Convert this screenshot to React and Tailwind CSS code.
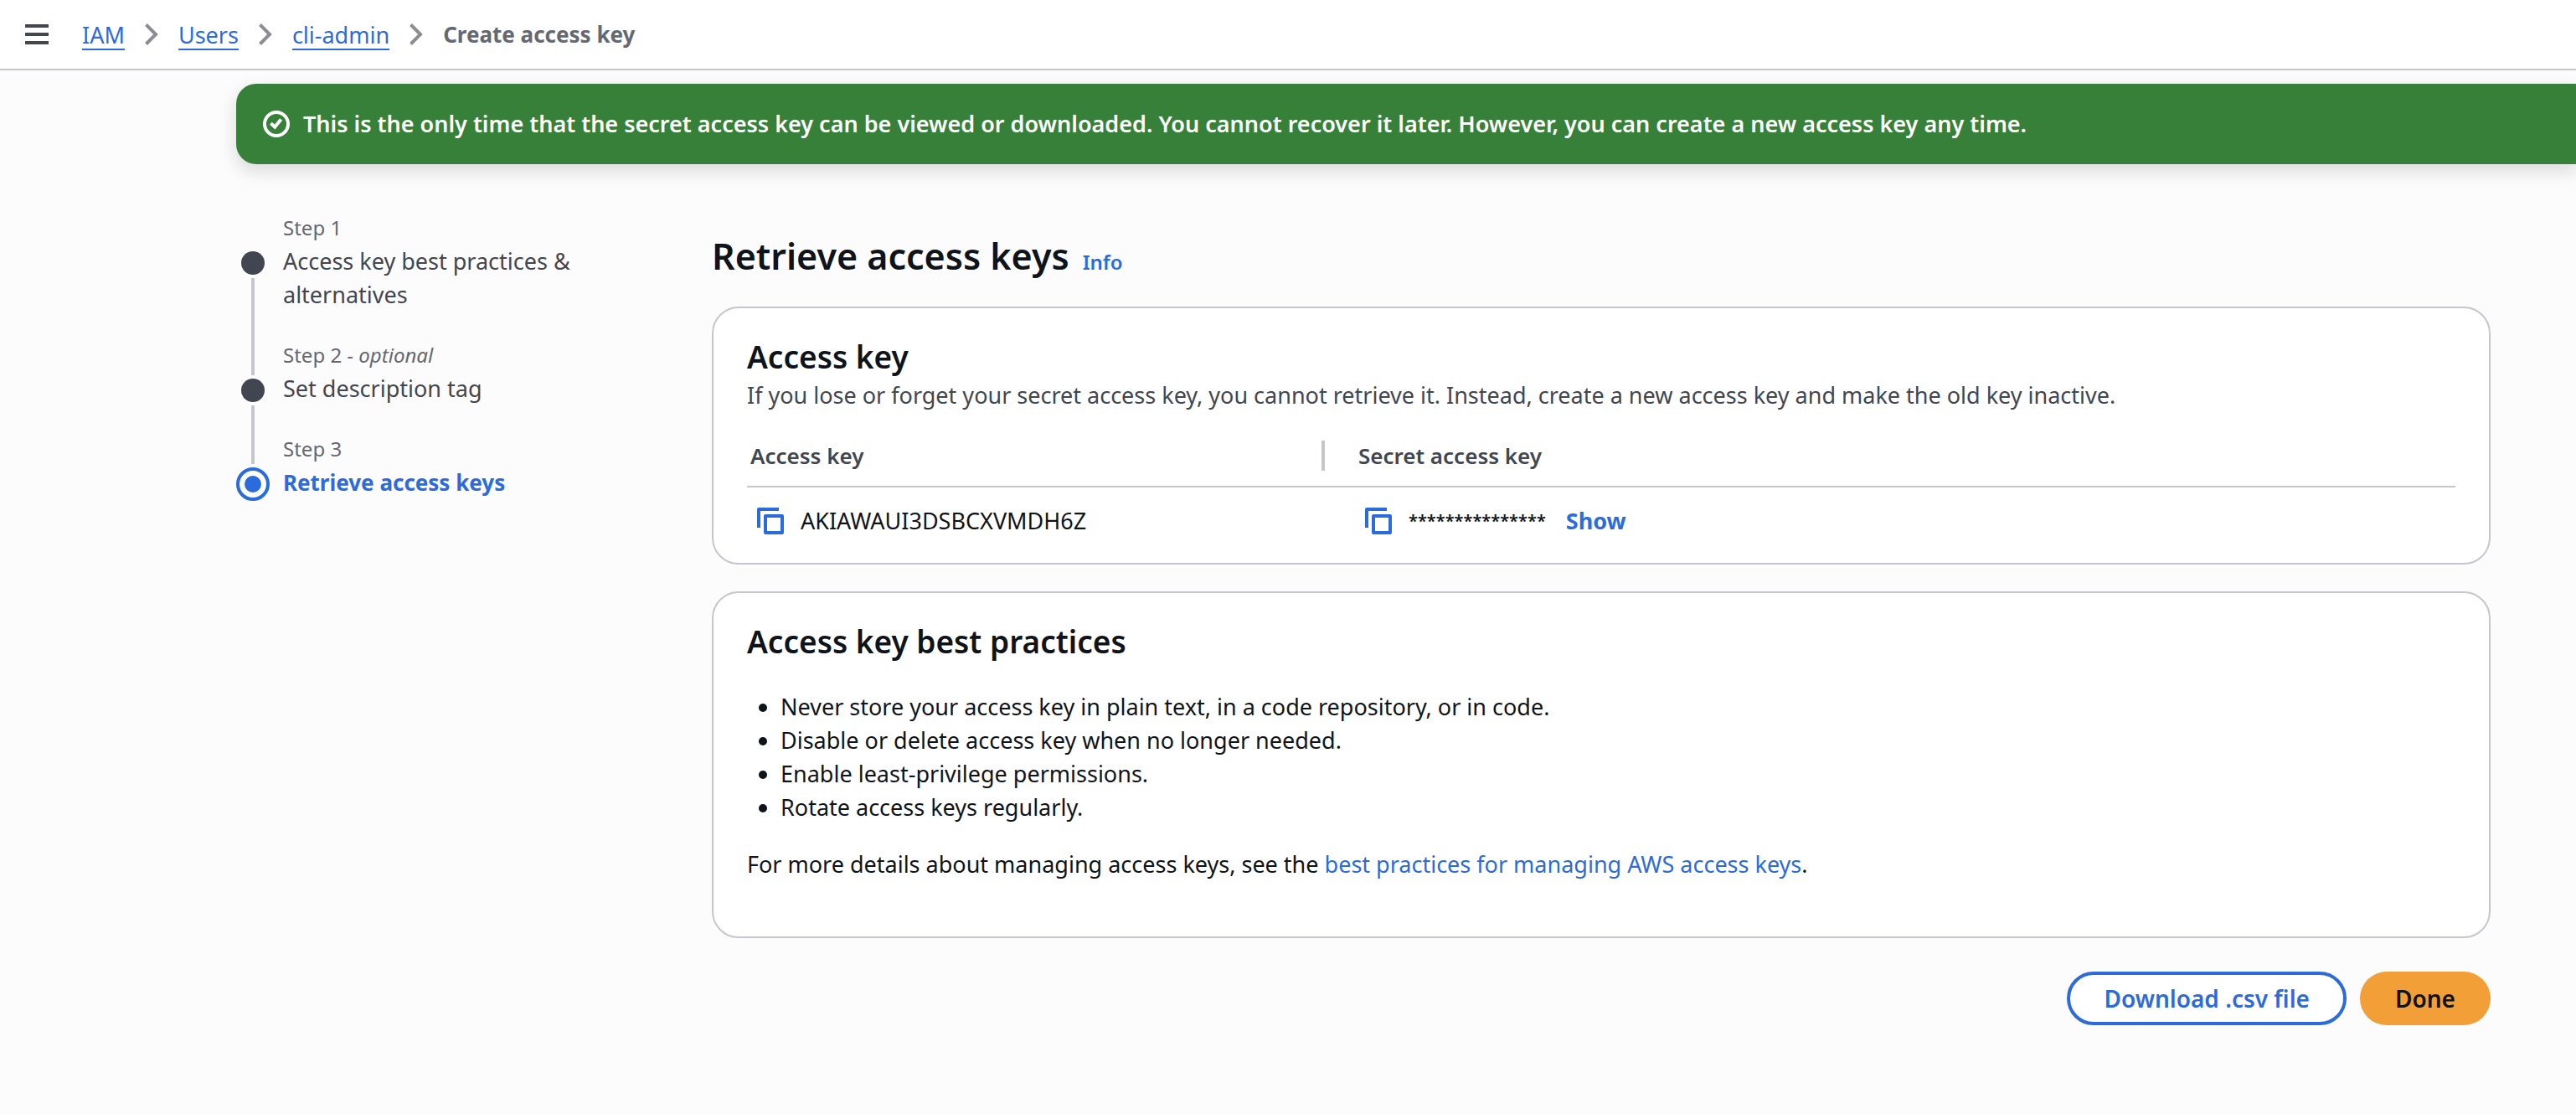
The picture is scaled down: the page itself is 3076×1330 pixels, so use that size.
import React from 'react';

const crumbs = ['IAM', 'Users', 'cli-admin'];

const practices = [
  'Never store your access key in plain text, in a code repository, or in code.',
  'Disable or delete access key when no longer needed.',
  'Enable least-privilege permissions.',
  'Rotate access keys regularly.',
];

function Chevron() {
  return (
    <svg className="h-[26px] w-4 shrink-0" viewBox="0 0 16 26" fill="none" stroke="#8c8c94" strokeWidth="4" aria-hidden="true">
      <path d="M1.500 1.500L13 13L1.500 24.500" />
    </svg>
  );
}

function CopyIcon() {
  return (
    <svg className="h-8 w-8" viewBox="0 0 32 32" fill="none" stroke="#2b6bdb" strokeWidth="4" strokeLinejoin="round" aria-hidden="true">
      <path d="M26 2H2v22" />
      <rect x="10" y="10" width="20" height="20" />
    </svg>
  );
}

function Dot({ current }) {
  return current ? (
    <span className="mt-1 grid size-10 shrink-0 place-items-center rounded-full border-4 border-[#2b6bdb]">
      <span className="size-5 rounded-full bg-[#2b6bdb]" />
    </span>
  ) : (
    <span className="my-1 size-7 shrink-0 rounded-full bg-[#424650]" />
  );
}

/* The rail of a step: the line coming in from above, the dot, and the line going on below. */
function Step({ label, optional, title, first, current }) {
  const lead = first ? 'h-11 w-1' : current ? 'h-[38px] w-1 bg-[#c6c6cd]' : 'h-11 w-1 bg-[#c6c6cd]';
  return (
    <li className="flex gap-4">
      <div className="flex w-10 flex-col items-center">
        <span className={lead} />
        <Dot current={current} />
        {!current && <span className="w-1 grow bg-[#c6c6cd]" />}
      </div>
      <div className={current ? '' : 'pb-8'}>
        <p className="text-[24px] leading-10 text-[#656871]">
          {label}
          {optional && (
            <>
              {' - '}
              <i>optional</i>
            </>
          )}
        </p>
        <p className={current ? 'text-[26px] leading-10 font-bold text-[#2b6bdb]' : 'text-[27px] leading-10 text-[#424650]'}>
          {title}
        </p>
      </div>
    </li>
  );
}

export default function App() {
  return (
    <div className='min-h-screen overflow-x-hidden bg-[#fcfcfc] font-["Noto_Sans","Open_Sans",sans-serif] text-[27px] leading-10 text-[#0f141a]'>
      <header className="flex h-[84px] items-center border-b-2 border-[#c6c6cd] bg-white pl-[30px]">
        <button type="button" aria-label="Open navigation" className="mr-10">
          <svg className="h-6 w-7" viewBox="0 0 28 24" fill="#424650" aria-hidden="true">
            <path d="M0 0h28v4H0zM0 10h28v4H0zM0 20h28v4H0z" />
          </svg>
        </button>
        <nav aria-label="Breadcrumbs">
          <ol className="flex items-center gap-6">
            {crumbs.map((name) => (
              <li key={name} className="flex items-center gap-6">
                <a href="#" className="mt-1 block border-b-2 border-[#2b6bdb] leading-8 text-[#2b6bdb]">
                  {name}
                </a>
                <Chevron />
              </li>
            ))}
            <li className="text-[26px] font-bold text-[#656871]">Create access key</li>
          </ol>
        </nav>
      </header>

      <div className="pt-4 pl-[282px]">
        <div role="status" className="flex h-24 items-center gap-4 rounded-l-3xl bg-[#37803a] pl-8 text-white shadow-[0_8px_20px_2px_rgba(0,7,22,0.12)]">
          <svg className="size-8 shrink-0" viewBox="0 0 32 32" fill="none" stroke="currentColor" strokeWidth="4" aria-hidden="true">
            <circle cx="16" cy="16" r="14" />
            <path d="M9.400 15.200l4.800 4.300 7.400-9" />
          </svg>
          <p className="font-semibold">
            This is the only time that the secret access key can be viewed or downloaded. You cannot recover it later. However, you can
            create a new access key any time.
          </p>
        </div>

        <div className="flex gap-20 pt-14 pr-[102px]">
          <nav aria-label="Steps" className="w-[488px] shrink-0">
            <ol>
              <Step label="Step 1" title={<>Access key best practices &amp;<br />alternatives</>} first />
              <Step label="Step 2" optional title="Set description tag" />
              <Step label="Step 3" title="Retrieve access keys" current />
            </ol>
          </nav>

          <main className="min-w-0 grow pt-[26px]">
            <div className="flex items-baseline gap-4">
              <h1 className="text-[43px] leading-[56px] font-semibold">Retrieve access keys</h1>
              <a href="#" className="text-[24px] font-semibold text-[#2b6bdb]">Info</a>
            </div>

            <section className="mt-8 rounded-[32px] border-2 border-[#c6c6cd] bg-white px-10 pt-9 pb-[30px]">
              <h2 className="text-[37px] leading-[44px] font-semibold">Access key</h2>
              <p className="mt-1 text-[#424650]">
                If you lose or forget your secret access key, you cannot retrieve it. Instead, create a new access key and make the old
                key inactive.
              </p>
              <table className="mt-[34px] w-full border-collapse text-left">
                <thead>
                  <tr className="border-b-2 border-[#c6c6cd] text-[26px] text-[#424650]">
                    <th scope="col" className="w-[690px] p-0 pb-[18px] font-semibold">
                      <div className="flex h-9 items-center border-r-4 border-[#c6c6cd] pl-1">Access key</div>
                    </th>
                    <th scope="col" className="p-0 pb-[18px] font-semibold">
                      <div className="flex h-9 items-center pl-10">Secret access key</div>
                    </th>
                  </tr>
                </thead>
                <tbody>
                  <tr>
                    <td className="px-3 pt-5">
                      <div className="flex items-center gap-5">
                        <button type="button" aria-label="Copy access key"><CopyIcon /></button>
                        <span>AKIAWAUI3DSBCXVMDH6Z</span>
                      </div>
                    </td>
                    <td className="pt-5 pl-12">
                      <div className="flex items-center gap-5">
                        <button type="button" aria-label="Copy secret access key"><CopyIcon /></button>
                        <span className="text-[20px] font-semibold">***************</span>
                        <button type="button" className="pl-1 font-bold text-[#2b6bdb]">Show</button>
                      </div>
                    </td>
                  </tr>
                </tbody>
              </table>
            </section>

            <section className="mt-8 rounded-[32px] border-2 border-[#c6c6cd] bg-white px-10 pt-9 pb-[66px]">
              <h2 className="text-[37px] leading-[44px] font-semibold">Access key best practices</h2>
              <ul className="mt-9 list-disc pl-10">
                {practices.map((text) => (
                  <li key={text}>{text}</li>
                ))}
              </ul>
              <p className="mt-7">
                For more details about managing access keys, see the{' '}
                <a href="#" className="text-[#2b6bdb]">best practices for managing AWS access keys</a>.
              </p>
            </section>

            <div className="mt-10 flex justify-end gap-4 text-[28px]">
              <button type="button" className="h-16 rounded-full border-4 border-[#2b6bdb] bg-white px-10 font-semibold text-[#2b6bdb]">
                Download .csv file
              </button>
              <button type="button" className="h-16 rounded-full bg-[#f29f38] px-[42px] font-semibold">
                Done
              </button>
            </div>
          </main>
        </div>
      </div>
    </div>
  );
}
